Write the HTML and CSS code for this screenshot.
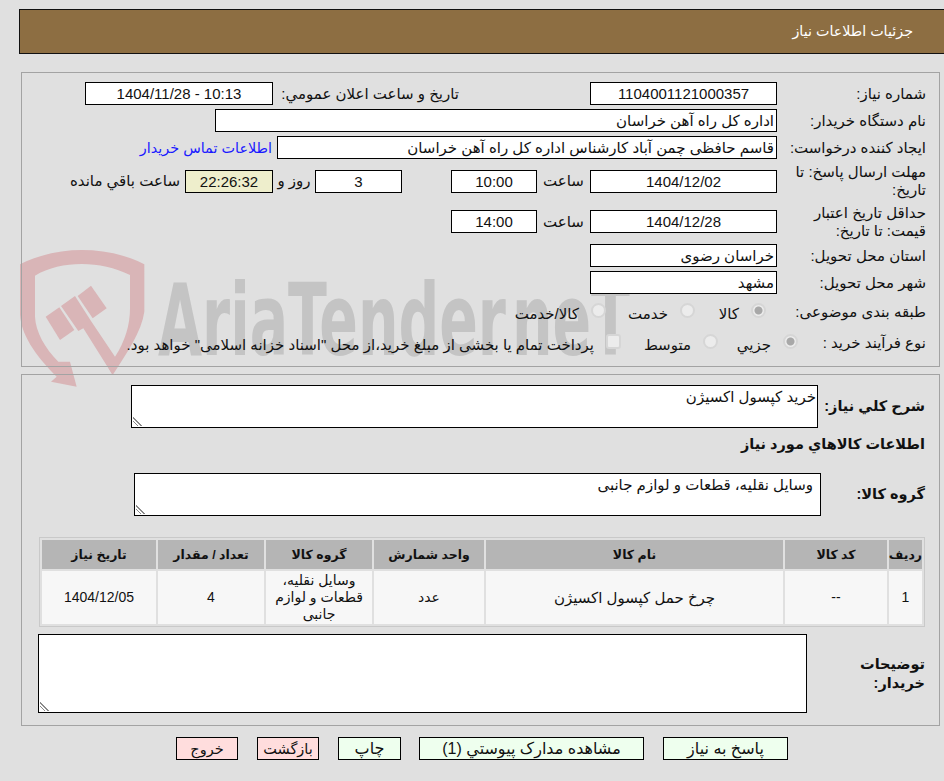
FILE: index.html
```html
<!DOCTYPE html>
<html lang="fa" dir="rtl">
<head>
<meta charset="utf-8">
<title>جزئیات اطلاعات نیاز</title>
<link rel="stylesheet" href="styles.css">
</head>
<body>
<div class="page">
  <div class="watermark" dir="ltr">
    <svg class="shield" viewBox="0 0 420 435" width="140" height="145">
      <path d="M15 58C75 28 140 15 200 15C265 15 330 28 388 58L388 200C380 260 335 325 293 390L270 350L300 335C330 290 345 240 345 190L345 90C300 68 250 57 200 57C150 57 100 68 60 92L60 215C62 260 90 310 130 350L165 350L185 425L108 410L125 395C75 345 20 280 15 210Z"/>
      <path d="M92 215L133 187L178 255L135 285Z"/>
      <path d="M138 183L180 153L228 228L300 335L293 390L205 250L190 258Z"/>
      <path d="M188 153L228 122L275 190L233 220Z"/>
    </svg>
    <span class="wm-text">AriaTender neT</span>
  </div>

  <header class="topbar">جزئیات اطلاعات نیاز</header>

  <section class="panel panel-info">
    <div class="row">
      <div class="lbl">شماره نیاز:</div>
      <div class="box center w187">1104001121000357</div>
      <div class="lbl-public">تاریخ و ساعت اعلان عمومي:</div>
      <div class="box center w188" dir="ltr">1404/11/28 - 10:13</div>
    </div>
    <div class="row">
      <div class="lbl">نام دستگاه خریدار:</div>
      <div class="box w562">اداره کل راه آهن خراسان</div>
    </div>
    <div class="row">
      <div class="lbl">ایجاد کننده درخواست:</div>
      <div class="box w500">قاسم حافظی چمن آباد کارشناس اداره کل راه آهن خراسان</div>
      <a class="contact" href="#">اطلاعات تماس خریدار</a>
    </div>
    <div class="row row-tall">
      <div class="lbl">مهلت ارسال پاسخ: تا تاریخ:</div>
      <div class="box center w187">1404/12/02</div>
      <div class="hour-lbl">ساعت</div>
      <div class="box center w86">10:00</div>
      <div class="box center w87 days">3</div>
      <div class="day-lbl">روز و</div>
      <div class="box center w88 clock">22:26:32</div>
      <div class="remain">ساعت باقي مانده</div>
    </div>
    <div class="row row-tall row-tall2">
      <div class="lbl">حداقل تاریخ اعتبار قیمت: تا تاریخ:</div>
      <div class="box center w187">1404/12/28</div>
      <div class="hour-lbl">ساعت</div>
      <div class="box center w86">14:00</div>
    </div>
    <div class="row">
      <div class="lbl">استان محل تحویل:</div>
      <div class="box w187">خراسان رضوی</div>
    </div>
    <div class="row">
      <div class="lbl">شهر محل تحویل:</div>
      <div class="box w187">مشهد</div>
    </div>
    <div class="row row-opt">
      <div class="lbl">طبقه بندی موضوعی:</div>
      <div class="opts opts-a">
        <label class="opt"><input type="radio" name="cat" checked disabled><span>کالا</span></label>
        <label class="opt"><input type="radio" name="cat" disabled><span>خدمت</span></label>
        <label class="opt"><input type="radio" name="cat" disabled><span>کالا/خدمت</span></label>
      </div>
    </div>
    <div class="row row-opt">
      <div class="lbl lbl-proc">نوع فرآیند خرید :</div>
      <div class="opts opts-b">
        <label class="opt"><input type="radio" name="proc" checked disabled><span>جزیي</span></label>
        <label class="opt"><input type="radio" name="proc" disabled><span>متوسط</span></label>
        <label class="opt opt-check"><input type="checkbox" disabled><span>پرداخت تمام یا بخشی از مبلغ خرید،از محل "اسناد خزانه اسلامی" خواهد بود.</span></label>
      </div>
    </div>
  </section>

  <section class="panel panel-items">
    <div class="field">
      <div class="flbl w107">شرح كلي نياز:</div>
      <textarea class="area a-short" readonly>خرید کپسول اکسیژن</textarea>
    </div>
    <h2 class="subhead">اطلاعات كالاهاي مورد نياز</h2>
    <div class="field">
      <div class="flbl w104">گروه کالا:</div>
      <textarea class="area a-short a-pad" readonly>وسایل نقلیه، قطعات و لوازم جانبی</textarea>
    </div>
    <table class="items">
      <colgroup>
        <col class="c1"><col class="c2"><col class="c3"><col class="c4"><col class="c5"><col class="c6"><col class="c7">
      </colgroup>
      <thead>
        <tr><th>ردیف</th><th>کد کالا</th><th>نام کالا</th><th>واحد شمارش</th><th>گروه کالا</th><th>تعداد / مقدار</th><th>تاریخ نیاز</th></tr>
      </thead>
      <tbody>
        <tr><td>1</td><td>--</td><td class="wide">چرخ حمل کپسول اکسیژن</td><td>عدد</td><td>وسایل نقلیه، قطعات و لوازم جانبی</td><td>4</td><td>1404/12/05</td></tr>
      </tbody>
    </table>
    <div class="field field-notes">
      <div class="flbl w118">توضیحات خریدار:</div>
      <textarea class="area a-notes" readonly></textarea>
    </div>
  </section>

  <nav class="actions">
    <button class="btn go w125" type="button">پاسخ به نیاز</button>
    <button class="btn go w225" type="button">مشاهده مدارک پیوستي (1)</button>
    <button class="btn go w63 btn-print" type="button">چاپ</button>
    <button class="btn stop w62" type="button">بازگشت</button>
    <button class="btn stop w62" type="button">خروج</button>
  </nav>
</div>
</body>
</html>
```

FILE: styles.css
```css
* { box-sizing: border-box; }
html, body { margin: 0; padding: 0; }
body {
  background: #e0e0e0;
  color: #111;
  font-family: "Liberation Sans", "DejaVu Sans", sans-serif;
  font-size: 15px;
  overflow: hidden;
}
.page { position: relative; width: 944px; height: 781px; overflow: hidden; padding-top: 9px; }

.watermark {
  position: absolute;
  left: 15px;
  top: 245px;
  width: 620px;
  height: 145px;
  pointer-events: none;
}
.shield { position: absolute; left: 0; top: 0; fill: #d9b5b7; }
.wm-text {
  position: absolute;
  left: 143px;
  top: 26px;
  font-family: "DejaVu Sans", sans-serif;
  font-size: 99px;
  line-height: 100px;
  font-weight: 700;
  word-spacing: -24px;
  color: #c4c4c4;
  white-space: nowrap;
  transform-origin: left top;
  transform: scaleX(0.575);
}

.topbar {
  margin-left: 19px;
  height: 45px;
  background: #8d6e42;
  border: 1px solid #111;
  border-right: 0;
  color: #fff;
  font-size: 14.3px;
  line-height: 43px;
  padding-right: 31px;
}

.panel {
  position: relative;
  margin-right: 4px;
  width: 919px;
  border: 1px solid #a3a3a3;
}
.panel-info { margin-top: 18px; height: 295px; padding: 9px 13px 0 0; display: flex; flex-direction: column; gap: 4px; }
.panel-items { margin-top: 7px; height: 352px; padding: 10px 14px 0 0; }

.row { display: flex; align-items: center; min-height: 23px; }
.row-tall { height: 36px; }
.row-tall2 { height: 37px; }
.row-opt { height: 27px; }
.lbl { width: 149px; flex: none; padding-left: 8px; line-height: 18px; }
.lbl-public { width: 186px; flex: none; margin-right: 131px; white-space: nowrap; }
.lbl-proc { width: 128px; padding-left: 0; }

.box {
  flex: none;
  height: 23px;
  line-height: 21px;
  background: #fff;
  border: 1px solid #000;
  padding: 0 2px;
  white-space: nowrap;
  overflow: hidden;
}
.center { text-align: center; }
.w187 { width: 187px; }
.w188 { width: 188px; }
.w562 { width: 562px; }
.w500 { width: 500px; }
.w86 { width: 86px; }
.w87 { width: 87px; }
.w88 { width: 88px; }
.days { margin-right: 49px; }
.clock { background: #eeeecc; }
.contact { color: #1a1aff; font-size: 14.4px; text-decoration: none; margin-right: 5px; white-space: nowrap; }
.hour-lbl { width: 53px; flex: none; text-align: center; }
.day-lbl { width: 42px; flex: none; text-align: center; }
.remain { margin-right: 5px; white-space: nowrap; }

.opts { display: flex; align-items: center; margin-top: 4px; }
.opts-a { margin-right: 11px; }
.opt { display: flex; align-items: center; white-space: nowrap; flex: none; }
.opt input {
  appearance: none;
  margin: 0 0 6px 12px;
  width: 15px;
  height: 15px;
  flex: none;
  background: #ececec;
  border: 2px solid #d6d6d6;
  border-radius: 50%;
}
.opt input:checked { background: radial-gradient(circle, #a8a8a8 0 3.5px, #ececec 4.5px); }
.opt-check input { border-radius: 3px; }
.opts-a .opt:nth-child(1) { width: 71px; }
.opts-a .opt:nth-child(2) { width: 89px; }
.opts-b .opt:nth-child(1) { width: 80px; }
.opts-b .opt:nth-child(2) { width: 97px; }

.field { display: flex; align-items: center; }
.flbl { flex: none; font-weight: 700; font-size: 14.5px; line-height: 19px; }
.w107 { width: 107px; }
.w104 { width: 104px; }
.w118 { width: 118px; }
.area {
  flex: none;
  display: block;
  margin: 0;
  background: #fff;
  border: 1px solid #000;
  border-radius: 0;
  outline: 0;
  font-family: "Liberation Sans", "DejaVu Sans", sans-serif;
  font-size: 15px;
  color: #111;
  padding: 2px 1px;
  resize: both;
}
.area::-webkit-resizer {
  background-image: linear-gradient(45deg, transparent 3px, #8a8a8a 3px, #8a8a8a 4px, transparent 4px, transparent 5.5px, #8a8a8a 5.5px, #8a8a8a 6.5px, transparent 6.5px);
  background-size: 9px 9px;
  background-position: left 1px bottom 1px;
  background-repeat: no-repeat;
}
.a-short { width: 687px; height: 43px; }
.a-pad { padding-right: 7px; }
.a-notes { width: 769px; height: 79px; }

.subhead { margin: 7px 0 0; font-size: 14.5px; line-height: 19px; font-weight: 700; height: 38px; }

.items {
  margin-top: 21px;
  width: 886px;
  table-layout: fixed;
  border-collapse: separate;
  border-spacing: 2px;
  border: 1px solid #c9c9c9;
  font-size: 14px;
  text-align: center;
}
.c1 { width: 33px; } .c2 { width: 102px; } .c3 { width: 297px; } .c4 { width: 110px; }
.c5 { width: 106px; } .c6 { width: 106px; } .c7 { width: 114px; }
.items th { background: #b5b5b5; height: 29px; padding: 0; font-size: 12.5px; font-weight: 700; }
.items td { background: #f7f7f7; height: 53px; padding: 0 4px; line-height: 17px; }
.items td.wide { font-size: 15px; }

.field-notes { margin-top: 7px; }

.actions { display: flex; gap: 19px; margin-top: 11px; padding-right: 156px; }
.btn {
  height: 23px;
  border: 1px solid #000;
  border-radius: 0;
  padding: 0;
  font-family: "Liberation Sans", "DejaVu Sans", sans-serif;
  color: #111;
}
.go { background: #eeffee; font-size: 16px; }
.stop { background: #ffdddd; font-size: 14.5px; }
.btn-print { margin-right: -1px; }
.w125 { width: 125px; }
.w225 { width: 225px; }
.w63 { width: 63px; }
.w62 { width: 62px; }
```
